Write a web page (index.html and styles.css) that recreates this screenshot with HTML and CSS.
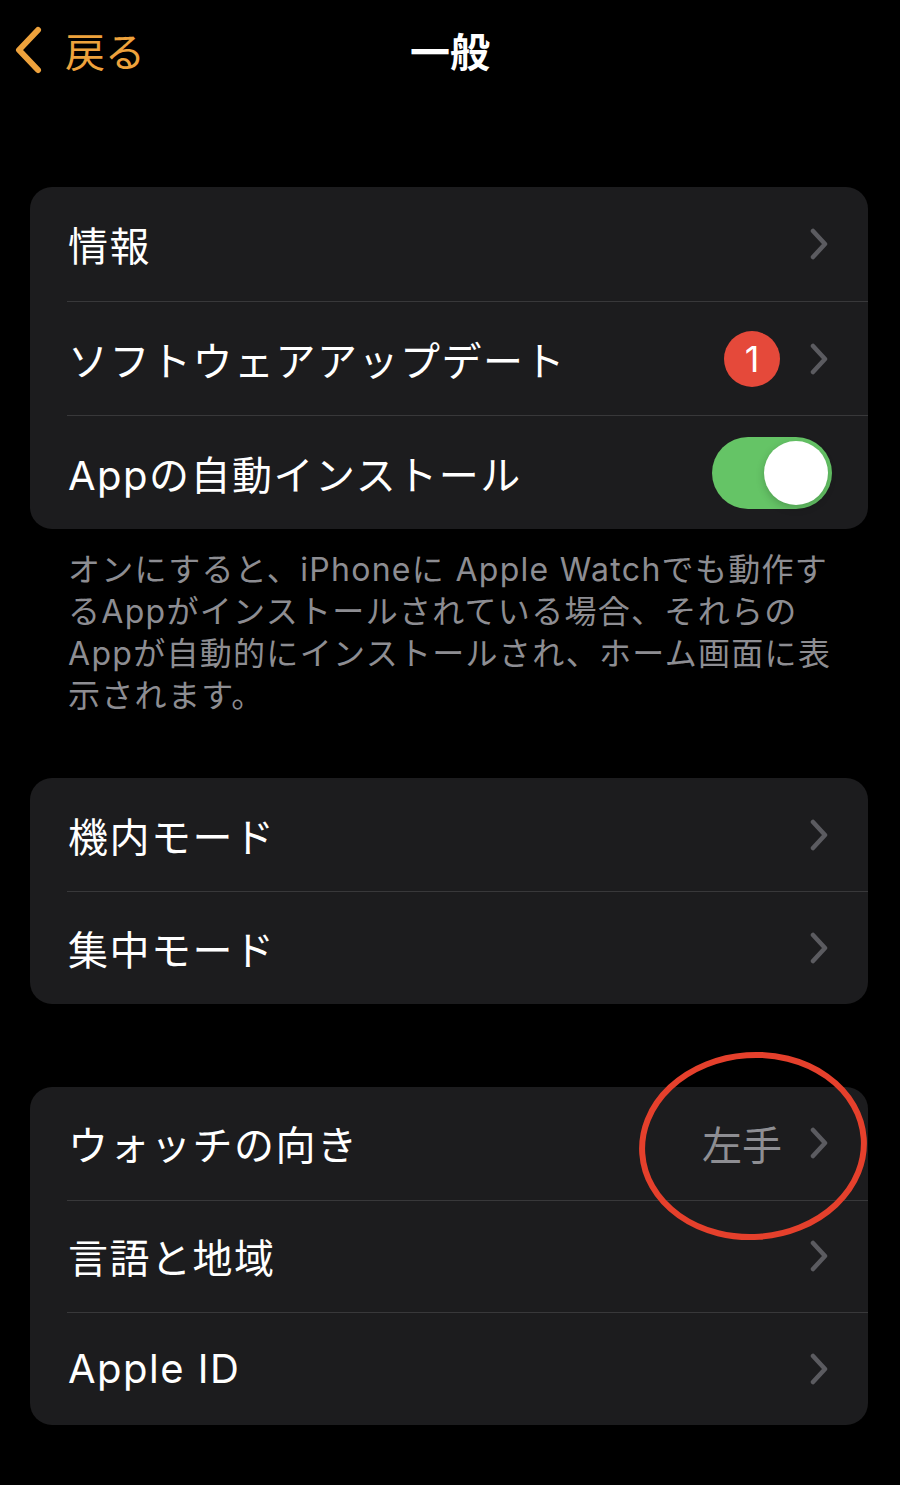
FILE: index.html
```html
<!DOCTYPE html>
<html lang="ja">
<head>
  <meta charset="UTF-8" />
  <title>一般</title>
  <link rel="stylesheet" href="styles.css">
</head>
<body>
  <div class="nav">
    <div class="back">
      <svg class="back-icon" width="32" height="50" viewBox="0 0 32 50">
        <path d="M26 5 L7 25 L26 45" fill="none" stroke="currentColor" stroke-width="6" stroke-linecap="round" stroke-linejoin="round"/>
      </svg>
      <span>戻る</span>
    </div>
    <h1>一般</h1>
  </div>

  <div class="group group-first">
    <div class="row">
      <div class="row-body">
        <span class="label">情報</span>
        <svg class="chev" width="18" height="32" viewBox="0 0 18 32"><path d="M3 3 L15 16 L3 29" /></svg>
      </div>
    </div>
    <div class="row">
      <div class="row-body">
        <span class="label">ソフトウェアアップデート</span>
        <span class="badge">1</span>
        <svg class="chev" width="18" height="32" viewBox="0 0 18 32"><path d="M3 3 L15 16 L3 29" /></svg>
      </div>
    </div>
    <div class="row">
      <div class="row-body">
        <span class="label">Appの自動インストール</span>
        <div class="toggle on"><div class="knob"></div></div>
      </div>
    </div>
  </div>
  <p class="note">オンにすると、iPhoneに Apple Watchでも動作す<br>るAppがインストールされている場合、それらの<br>Appが自動的にインストールされ、ホーム画面に表<br>示されます。</p>

  <div class="group group-second">
    <div class="row">
      <div class="row-body">
        <span class="label">機内モード</span>
        <svg class="chev" width="18" height="32" viewBox="0 0 18 32"><path d="M3 3 L15 16 L3 29" /></svg>
      </div>
    </div>
    <div class="row">
      <div class="row-body">
        <span class="label">集中モード</span>
        <svg class="chev" width="18" height="32" viewBox="0 0 18 32"><path d="M3 3 L15 16 L3 29" /></svg>
      </div>
    </div>
  </div>

  <div class="group group-third">
    <div class="row">
      <div class="row-body">
        <span class="label">ウォッチの向き</span>
        <span class="value">左手</span>
        <svg class="chev" width="18" height="32" viewBox="0 0 18 32"><path d="M3 3 L15 16 L3 29" /></svg>
      </div>
    </div>
    <div class="row">
      <div class="row-body">
        <span class="label">言語と地域</span>
        <svg class="chev" width="18" height="32" viewBox="0 0 18 32"><path d="M3 3 L15 16 L3 29" /></svg>
      </div>
    </div>
    <div class="row">
      <div class="row-body">
        <span class="label">Apple ID</span>
        <svg class="chev" width="18" height="32" viewBox="0 0 18 32"><path d="M3 3 L15 16 L3 29" /></svg>
      </div>
    </div>
    <!-- hand-drawn highlight around the watch orientation value -->
    <svg class="mark" width="232" height="192" viewBox="0 0 232 192">
      <ellipse cx="116" cy="96" rx="111" ry="91" transform="rotate(-4 116 96)" />
    </svg>
  </div>
</body>
</html>
```

FILE: styles.css
```css
body {
  margin: 0;
  background: #000;
  color: #fff;
  font-family: Inter, "Noto Sans CJK JP", sans-serif;
}

.nav {
  position: relative;
  height: 100px;
  display: flex;
  align-items: center;
  justify-content: center;
}
.back {
  position: absolute;
  left: 12px;
  top: 25px;
  display: flex;
  align-items: center;
  gap: 21px;
  color: #eea23c;
  font-size: 40px;
  font-family: "Noto Sans CJK JP", sans-serif;
  line-height: 50px;
}
.back-icon {
  display: block;
}
.nav h1 {
  margin: 0;
  font-size: 40px;
  font-weight: bold;
  font-family: "Noto Sans CJK JP", sans-serif;
  line-height: 50px;
}

.group {
  position: relative;
  background: #1c1c1e;
  border-radius: 22px;
  margin: 0 32px 0 30px;
}
.group-first {
  margin-top: 87px;
}
.group-first .row {
  height: 114px;
}
.group-second {
  margin-top: 61px;
}
.group-third {
  margin-top: 83px;
}
.group-third .row {
  height: 112.5px;
}

.row {
  height: 113px;
  padding-left: 37px;
  display: flex;
}
.row-body {
  flex: 1;
  display: flex;
  align-items: center;
  padding-right: 40px;
}
.row + .row .row-body {
  border-top: 1px solid #38383a;
}
.label {
  flex: 1;
  font-size: 40px;
  padding-left: 1px;
  letter-spacing: 1.5px;
}
.value {
  font-size: 40px;
  color: #8e8e93;
  margin-right: 28px;
  font-family: "Noto Sans CJK JP", sans-serif;
}
.chev {
  display: block;
}
.chev path {
  fill: none;
  stroke: #5b5b60;
  stroke-width: 4.5;
  stroke-linecap: round;
  stroke-linejoin: round;
}

.badge {
  width: 56px;
  height: 56px;
  border-radius: 50%;
  background: #e5493a;
  color: #fff;
  font-size: 36px;
  line-height: 56px;
  text-align: center;
  margin-right: 30px;
}

.toggle {
  width: 120px;
  height: 72px;
  border-radius: 36px;
  background: #3a3a3c;
  position: relative;
  margin-right: -4px;
}
.toggle.on {
  background: #65c466;
}
.knob {
  position: absolute;
  top: 4px;
  right: 4px;
  width: 64px;
  height: 64px;
  border-radius: 50%;
  background: #fff;
  box-shadow: 0 3px 8px rgba(0, 0, 0, 0.2);
}

.note {
  margin: 20px 30px 0 68px;
  font-size: 32px;
  line-height: 42px;
  color: #8d8d92;
  white-space: nowrap;
  letter-spacing: 1.3px;
}

.mark {
  position: absolute;
  left: 607px;
  top: -37px;
  overflow: visible;
}
.mark ellipse {
  fill: none;
  stroke: #e5402c;
  stroke-width: 6;
}
```
